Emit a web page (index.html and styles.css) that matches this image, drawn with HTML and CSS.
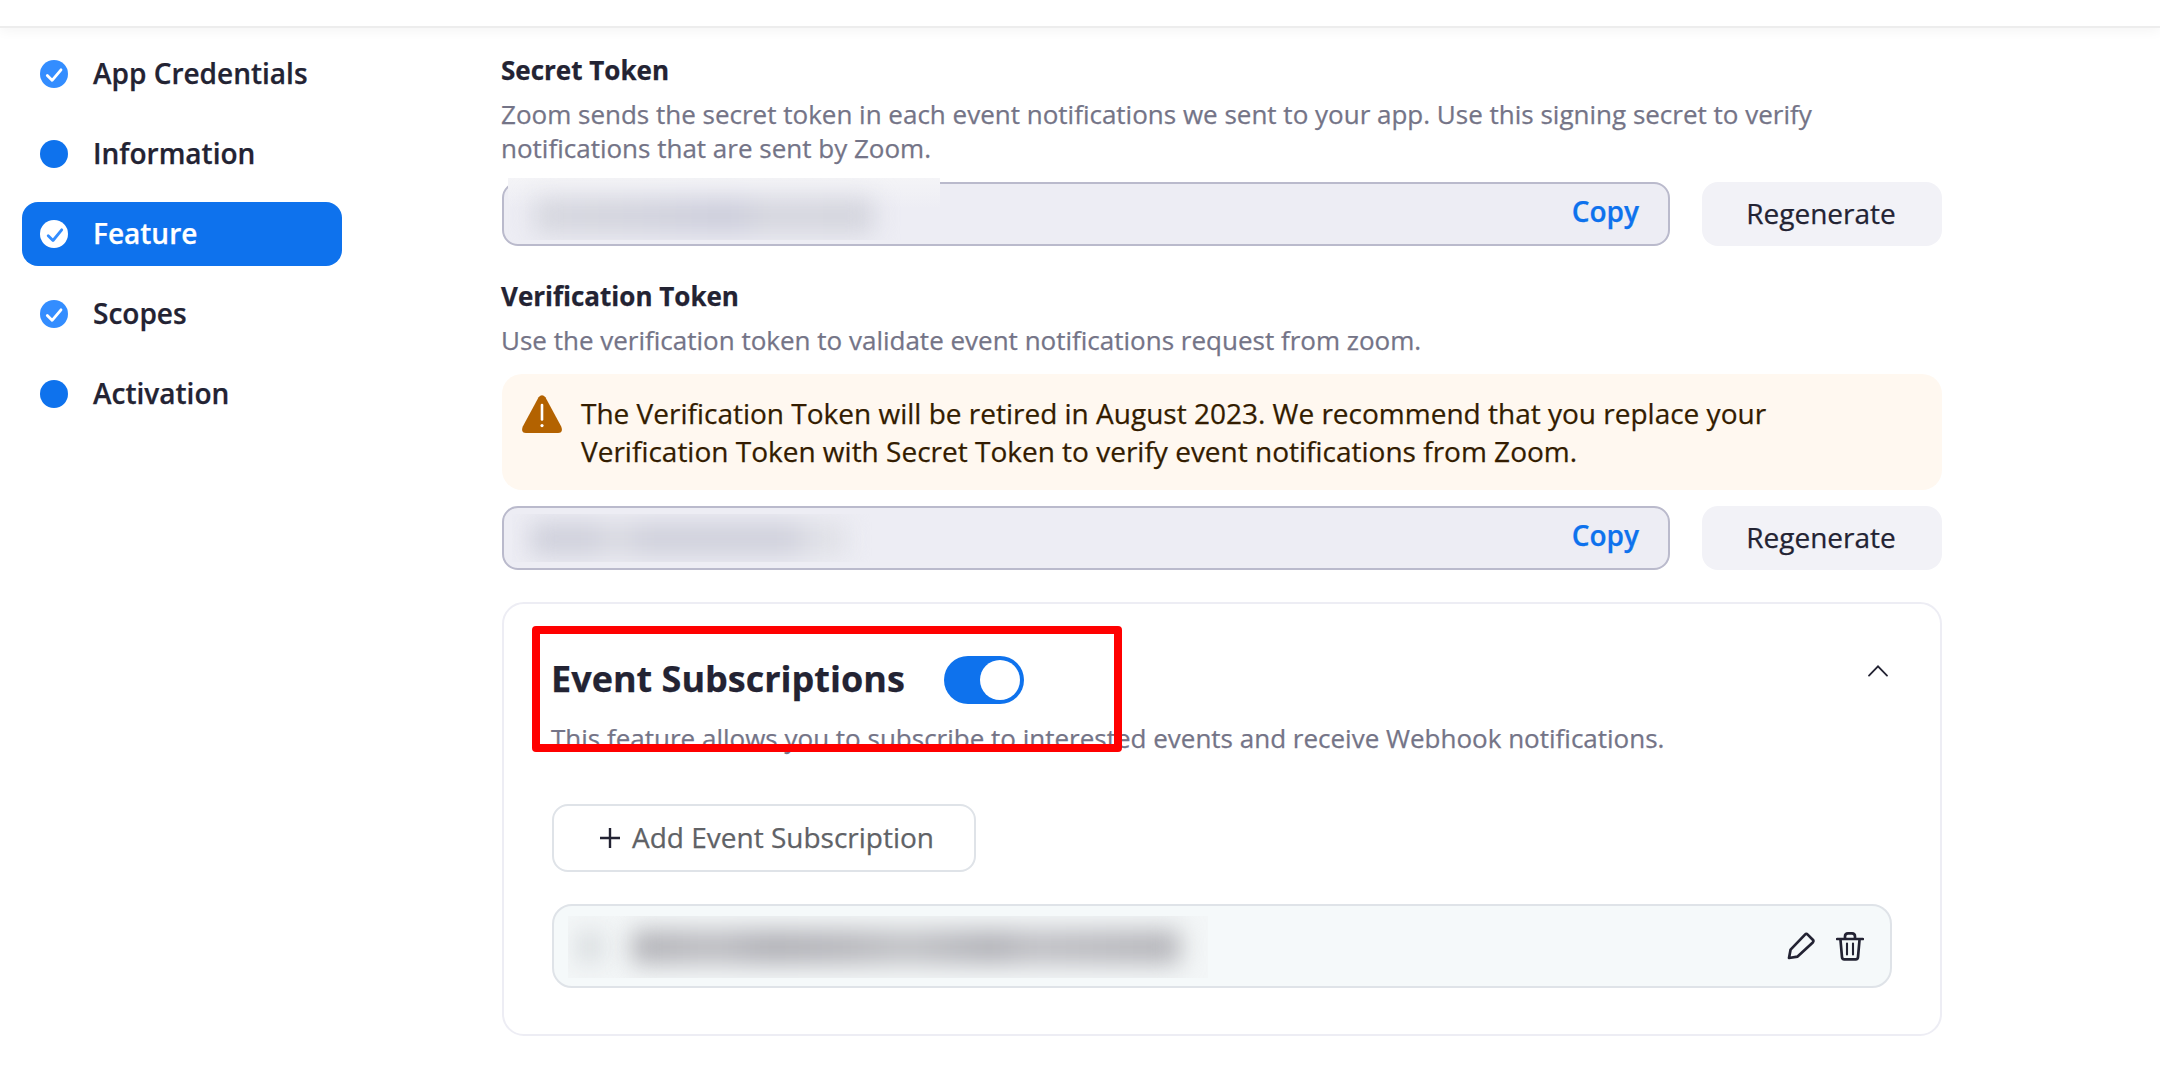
FILE: index.html
```html
<!DOCTYPE html>
<html lang="en">
<head>
<meta charset="utf-8">
<title>Feature</title>
<link rel="stylesheet" href="styles.css">
</head>
<body>
<header class="topbar"></header>
<div class="layout">
  <nav class="steps">
    <a class="step"><svg class="step-icon" viewBox="0 0 28 28"><circle cx="14" cy="14" r="14" fill="#338dff"/><path d="M7.3 15.4 12.1 20.3 21 9.8" fill="none" stroke="#fff" stroke-width="2.8" stroke-linecap="round" stroke-linejoin="round"/></svg><span>App Credentials</span></a>
    <a class="step"><svg class="step-icon" viewBox="0 0 28 28"><circle cx="14" cy="14" r="14" fill="#0e72ed"/></svg><span>Information</span></a>
    <a class="step active"><svg class="step-icon" viewBox="0 0 28 28"><circle cx="14" cy="14" r="14" fill="#fff"/><path d="M8.2 15.7 13 20.5 21.7 9.8" fill="none" stroke="#338dff" stroke-width="2.8" stroke-linecap="round" stroke-linejoin="round"/></svg><span>Feature</span></a>
    <a class="step"><svg class="step-icon" viewBox="0 0 28 28"><circle cx="14" cy="14" r="14" fill="#338dff"/><path d="M7.3 15.4 12.1 20.3 21 9.8" fill="none" stroke="#fff" stroke-width="2.8" stroke-linecap="round" stroke-linejoin="round"/></svg><span>Scopes</span></a>
    <a class="step"><svg class="step-icon" viewBox="0 0 28 28"><circle cx="14" cy="14" r="14" fill="#0e72ed"/></svg><span>Activation</span></a>
  </nav>
  <main class="content">
    <section class="token secret">
      <h2 class="label">Secret Token</h2>
      <p class="hint">Zoom sends the secret token in each event notifications we sent to your app. Use this signing secret to verify notifications that are sent by Zoom.</p>
      <div class="token-row">
        <div class="field"><span class="veil veil-secret"><i class="smudge"></i></span><span class="copy">Copy</span></div>
        <button class="regenerate">Regenerate</button>
      </div>
    </section>
    <section class="token verification">
      <h2 class="label">Verification Token</h2>
      <p class="hint">Use the verification token to validate event notifications request from zoom.</p>
      <div class="notice">
        <svg class="warning" viewBox="0 0 40 38"><path d="M16.6 2.3Q20-1.8 23.4 2.3L39.2 31.5Q41.6 37.6 36 38H4Q-1.6 37.6.8 31.5Z" fill="#b36200"/><path d="M20 10v14.5" stroke="#fff" stroke-width="2.6" stroke-linecap="round"/><circle cx="20" cy="30.6" r="1.6" fill="#fff"/></svg>
        <p>The Verification Token will be retired in August 2023. We recommend that you replace your Verification Token with Secret Token to verify event notifications from Zoom.</p>
      </div>
      <div class="token-row">
        <div class="field"><span class="veil veil-verification"><i class="smudge"></i></span><span class="copy">Copy</span></div>
        <button class="regenerate">Regenerate</button>
      </div>
    </section>
    <section class="card">
      <div class="card-head">
        <h1>Event Subscriptions</h1>
        <span class="toggle"><span class="knob"></span></span>
        <svg class="chevron" viewBox="0 0 20 12"><path d="M1 10.6 10 1.4l9 9.2" fill="none" stroke="#232333" stroke-width="1.8" stroke-linecap="round"/></svg>
      </div>
      <p class="hint">This feature allows you to subscribe to interested events and receive Webhook notifications.</p>
      <button class="add"><svg class="plus" viewBox="0 0 20 20"><path d="M10 0v20M0 10h20" stroke="#232333" stroke-width="2.4"/></svg><span>Add Event Subscription</span></button>
      <div class="subscription">
        <span class="veil veil-subscription"><i class="smudge dot"></i><i class="smudge name"></i></span>
        <svg class="pencil" viewBox="0 0 28 28"><path d="M2 26 3.6 17.6 18 2.6Q19.3 1.2 20.7 2.6L25.8 7.7Q27 9 25.8 10.4L10.6 24.6Z" fill="none" stroke="#232333" stroke-width="2.7" stroke-linejoin="round"/></svg>
        <svg class="trash" viewBox="0 0 28 30"><path d="M1.2 8h25.6M9 8V5.6Q9 2.4 12 2.4h4q3 0 3 3.2V8M4.4 8l1.6 18.2Q6.2 28.4 8.2 28.4h11.6q2 0 2.2-2.2L23.6 8" fill="none" stroke="#232333" stroke-width="2.7" stroke-linecap="round"/><path d="M11 12.5v11M17 12.5v11" fill="none" stroke="#232333" stroke-width="2.1" stroke-linecap="round"/></svg>
      </div>
      <div class="highlight"></div>
    </section>
  </main>
</div>
</body>
</html>
```
FILE: styles.css
```css
* { box-sizing: border-box; }
body { margin: 0; background: #fff; color: #232333; font-family: "Open Sans", sans-serif; font-size: 28px; -webkit-text-stroke: .25px; }
h1, h2, p { margin: 0; }
svg { display: block; flex: none; }
button { font: inherit; color: inherit; border: 0; padding: 0; }
.topbar { height: 28px; border-bottom: 2px solid #ededed; box-shadow: 0 4px 12px rgba(0, 0, 0, .04); }
.layout { display: flex; align-items: flex-start; }
.steps { width: 320px; margin: 14px 159px 0 22px; display: flex; flex-direction: column; gap: 16px; }
.step { height: 64px; padding-left: 18px; border-radius: 16px; display: flex; align-items: center; gap: 25px; font-weight: 600; line-height: 38px; }
.step span { padding-bottom: 1px; margin-top: -1px; }
.step.active { background: #0e72ed; color: #fff; }
.step-icon { width: 28px; height: 28px; }
.content { width: 1441px; padding-top: 25px; }
.label { font-size: 26px; font-weight: 700; line-height: 34px; margin-bottom: 10px; }
.hint { font-size: 26px; line-height: 34px; color: #747487; }
.secret .hint { margin-bottom: 17px; }
.verification { margin-top: 33px; }
.token-row { display: flex; gap: 32px; margin-left: 1px; }
.field { position: relative; width: 1168px; height: 64px; border: 2px solid #babacc; border-radius: 16px; background: #ededf4; display: flex; justify-content: flex-end; padding: 8px 29px 0 0; }
.copy { color: #0e72ed; font-weight: 600; line-height: 38px; }
.regenerate { width: 240px; height: 64px; padding: 0 2px 2px 0; border-radius: 16px; background: #f2f2f7; }
.notice { margin: 17px 0 16px 1px; height: 116px; border-radius: 20px; background: #fff8f0; color: #331c00; padding: 20px 120px 0 20px; display: flex; gap: 19px; line-height: 38px; }
.warning { width: 40px; height: 38px; margin-top: 1px; }
.veil { position: absolute; overflow: hidden; }
.smudge { position: absolute; filter: blur(12px); }
.veil-secret { left: 4px; top: -6px; width: 432px; height: 62px; background: linear-gradient(#f4f4f7, #ededf4 30px); }
.veil-secret .smudge { left: 26px; top: 20px; width: 340px; height: 36px; background: linear-gradient(90deg, #d6d7de, #d2d3dd 30%, #cccddb 58%, #d6d7de 70%, #d3d4dd); }
.veil-verification { left: 8px; top: 6px; width: 400px; height: 48px; }
.veil-verification .smudge { left: 18px; top: 8px; width: 316px; height: 34px; background: linear-gradient(90deg, #cfd0db 20%, #dcdde3 27%, #cfd0db 36%, #cfd0db 82%, #dfe0e6 90%); }
.card { position: relative; margin: 32px 0 0 1px; height: 434px; border: 2px solid #ededf4; border-radius: 22px; padding: 48px 48px 0; }
.card-head { display: flex; align-items: center; height: 56px; margin-left: -1px; }
.card-head h1 { font-size: 36px; font-weight: 700; line-height: 48px; padding-bottom: 2px; }
.toggle { width: 80px; height: 48px; margin-left: 39px; border-radius: 24px; background: #0e72ed; padding: 4px; display: flex; justify-content: flex-end; }
.knob { width: 40px; height: 40px; border-radius: 50%; background: #fff; }
.chevron { width: 20px; height: 12px; margin: -18px 4px 0 auto; }
.card .hint { margin: 13px 0 0 -1px; white-space: nowrap; }
.add { margin-top: 49px; width: 424px; height: 68px; background: #fff; border: 2px solid #dfe3e8; border-radius: 16px; display: flex; align-items: center; justify-content: center; gap: 12px; padding-left: 6px; color: #606266; }
.add span { padding-bottom: 2px; }
.plus { width: 20px; height: 20px; }
.subscription { position: relative; margin-top: 32px; height: 84px; border: 2px solid #dfe3e8; border-radius: 20px; background: #f5f9fa; display: flex; align-items: center; justify-content: flex-end; padding-right: 26px; gap: 21px; }
.pencil { width: 28px; height: 28px; }
.trash { width: 28px; height: 30px; }
.veil-subscription { left: 14px; top: 10px; width: 640px; height: 62px; background: #f3f6f7; }
.veil-subscription .dot { left: 10px; top: 16px; width: 24px; height: 30px; background: #d5d9dc; }
.veil-subscription .name { left: 64px; top: 14px; width: 548px; height: 34px; background: linear-gradient(90deg, #b0b0b5, #bcbcc1 15%, #afafb5 25%, #b6b6bb 40%, #c0c1c5 50%, #b0b0b6 66%, #bebec3 73%, #b3b3b8); }
.highlight { position: absolute; left: 28px; top: 22px; width: 590px; height: 126px; border: 8px solid #f00; border-radius: 4px; }
```
